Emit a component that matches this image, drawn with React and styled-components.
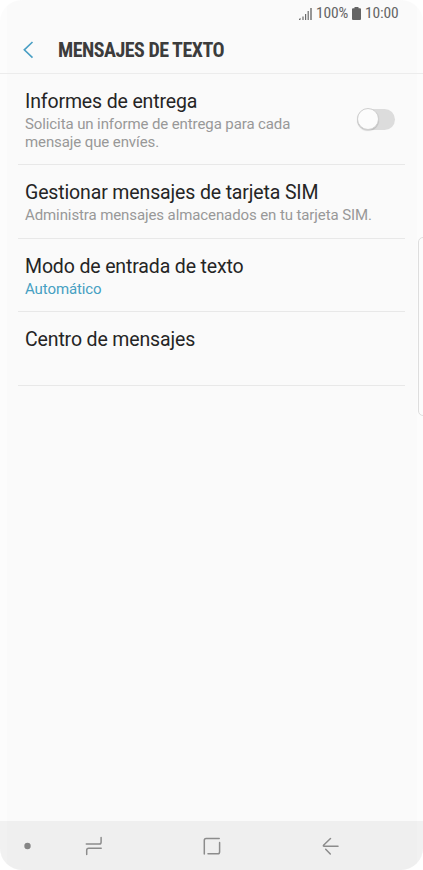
import React, { useState } from 'react'
import styled, { createGlobalStyle } from 'styled-components'

const settings = [
    { id: 'reports', title: 'Informes de entrega', text: 'Solicita un informe de entrega para cada mensaje que envíes.', toggle: true },
    { id: 'sim', title: 'Gestionar mensajes de tarjeta SIM', text: 'Administra mensajes almacenados en tu tarjeta SIM.' },
    { id: 'input', title: 'Modo de entrada de texto', text: 'Automático', active: true },
    { id: 'center', title: 'Centro de mensajes' },
]

function App() {
    const [reports, setReports] = useState(false)

    return <>
        <GlobalStyle />
        <Screen>
            <StatusBar>
                <svg width="13" height="12" viewBox="0 0 13 12" fill="#6b6b6b">
                    <path d="M0 12v-1l1.5-1.2V12zM3.4 12V8.6h1.2V12zM6 12V6h1.2v6zM8.6 12V3h1.2v9zM11.3 12V0h1.4v12z" />
                </svg>
                <Status $width={32}>100%</Status>
                <svg width="9" height="13" viewBox="0 0 9 13" fill="#646464">
                    <path d="M2.5 0h4v1.3H8a1 1 0 0 1 1 1V12a1 1 0 0 1-1 1H1a1 1 0 0 1-1-1V2.3a1 1 0 0 1 1-1h1.5z" />
                </svg>
                <Status $width={34}>10:00</Status>
            </StatusBar>
            <Header>
                <svg width="11" height="18" viewBox="0 0 11 18" fill="none" stroke="#4a9fc4" strokeWidth="1.6">
                    <path d="M9.500 1L1.300 8.800L9.500 16.600" />
                </svg>
                <Heading>MENSAJES DE TEXTO</Heading>
            </Header>
            <List>
                {settings.map(item => (
                    <Row key={item.id} $tall={item.toggle}>
                        <Label $narrow={item.toggle}>
                            <Title>{item.title}</Title>
                            {item.text && <Text $active={item.active}>{item.text}</Text>}
                        </Label>
                        {item.toggle && <Toggle aria-label={item.title} onClick={() => setReports(!reports)}>
                            <Knob $on={reports} />
                        </Toggle>}
                    </Row>
                ))}
            </List>
            <EdgeHandle />
            <NavBar>
                <svg width="423" height="49" viewBox="0 0 423 49" fill="none" stroke="#8c8c8c" strokeWidth="1.5" strokeLinecap="round" strokeLinejoin="round">
                    <circle cx="27.5" cy="25" r="3.2" fill="#858585" stroke="none" />
                    <path d="M86.300 23h13q1.800 0 1.800-1.800V16.500M101.200 27.200H88.700q-2 0-2 2V33.500" />
                    <path d="M204.300 33V19.300q0-1.800 1.800-1.800H219.200M219.600 21.500V31q0 1.800-1.800 1.800H208" />
                    <path d="M330.500 17.500L323.500 24.300Q323 25.200 324 25.200H338M325.700 28.300L330.300 33" />
                </svg>
            </NavBar>
        </Screen>
    </>
}

export default App

const GlobalStyle = createGlobalStyle`
    body {
        margin: 0;
        background: #fff;
        font-family: Roboto, sans-serif;
    }
`
const Screen = styled.div`
    position: relative;
    display: flex;
    flex-direction: column;
    box-sizing: border-box;
    width: 423px;
    height: 870px;
    background: linear-gradient(90deg, #fcfcfc 7px, #fafafa 7px, #fafafa 417px, #fcfcfc 417px);
    border-radius: 22px;
    overflow: hidden;
`
const StatusBar = styled.div`
    display: flex;
    align-items: center;
    justify-content: flex-end;
    gap: 4px;
    height: 27px;
    padding-right: 24px;
`
const Status = styled.span`
    width: ${props => props.$width}px;
    font-family: 'Roboto Condensed', Roboto, sans-serif;
    font-stretch: 75%;
    font-size: 15.5px;
    line-height: 27px;
    letter-spacing: -0.15px;
    white-space: nowrap;
    color: #656565;
`
const Header = styled.header`
    display: flex;
    align-items: center;
    gap: 24px;
    height: 46px;
    padding-left: 23px;
    border-bottom: 1px solid #ececec;
`
const Heading = styled.h1`
    margin: 0;
    font-family: 'Roboto Condensed', Roboto, sans-serif;
    font-stretch: 75%;
    font-size: 20px;
    font-weight: 700;
    letter-spacing: -0.5px;
    white-space: nowrap;
    color: #3c3c3c;
`
const List = styled.main`
    flex: 1;
    padding: 0 18px;
`
const Row = styled.section`
    display: flex;
    justify-content: space-between;
    box-sizing: border-box;
    height: ${props => props.$tall ? 91 : 73.6}px;
    padding: 15px 10px 0 7px;
    border-bottom: 1px solid #e8e8e8;
`
const Label = styled.div`
    width: ${props => props.$narrow ? '290px' : 'auto'};
    white-space: ${props => props.$narrow ? 'normal' : 'nowrap'};
`
const Title = styled.h2`
    margin: 0;
    font-size: 19.5px;
    font-weight: 400;
    line-height: 26px;
    letter-spacing: -0.14px;
    color: #252525;
`
const Text = styled.p`
    margin: 1px 0 0;
    font-size: 15px;
    line-height: 17.5px;
    letter-spacing: -0.1px;
    color: ${props => props.$active ? '#46a0c2' : '#989898'};
`
const Toggle = styled.button`
    width: 38px;
    height: 21px;
    margin: 20px 0 0;
    padding: 0;
    border: 0;
    border-radius: 11px;
    background: #dcdcdc;
`
const Knob = styled.span`
    display: block;
    box-sizing: border-box;
    width: 22px;
    height: 22px;
    border: 1px solid #d0d0d0;
    border-radius: 50%;
    background: #fcfcfc;
    box-shadow: 0 1px 1px rgba(0, 0, 0, 0.15);
    transform: translate(${props => props.$on ? 16 : 0}px, -1px);
`
const EdgeHandle = styled.div`
    position: absolute;
    top: 237px;
    right: -8px;
    box-sizing: border-box;
    width: 13px;
    height: 179px;
    border: 1px solid #dedede;
    border-radius: 5px;
    background: #fcfcfc;
`
const NavBar = styled.nav`
    height: 49px;
    background: linear-gradient(90deg, #f1f1f1 7px, #efefef 7px, #efefef 417px, #f1f1f1 417px);
`
